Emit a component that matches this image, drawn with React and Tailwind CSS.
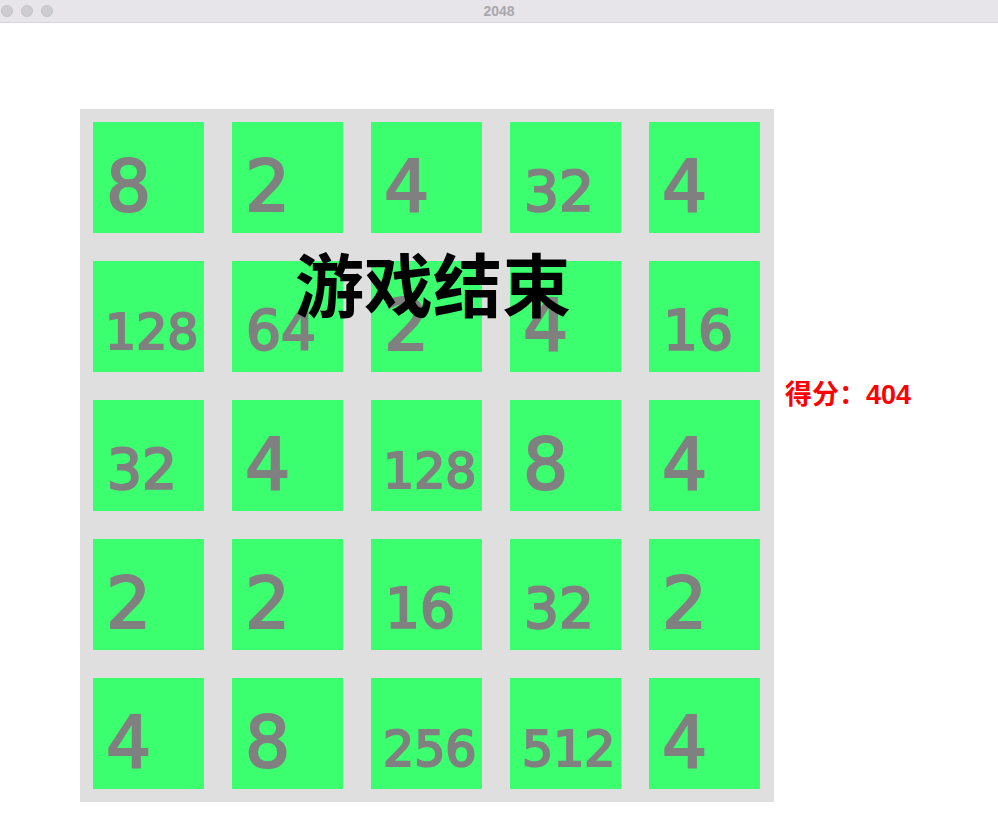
import React from "react";

const rows = [
  [8, 2, 4, 32, 4],
  [128, 64, 2, 4, 16],
  [32, 4, 128, 8, 4],
  [2, 2, 16, 32, 2],
  [4, 8, 256, 512, 4],
];

function Tile({ v }) {
  const n = String(v).length;
  const cls =
    n === 1
      ? "text-[71px] pb-[11px] pl-[13px]"
      : n === 2
      ? "text-[55px] pb-[14px] pl-[14px]"
      : "text-[49px] pb-[15px] pl-[12px]";
  return (
    <div className={`w-[111px] h-[111px] bg-[#3bff6e] flex items-end ${cls}`}>
      <span className="leading-none font-normal text-[#808080] [-webkit-text-stroke:2.2px_#808080]">{v}</span>
    </div>
  );
}

export default function App() {
  return (
    <div className="w-[998px] h-[825px] bg-white overflow-hidden font-['DejaVu_Sans',sans-serif]">
      <div className="relative h-[23px] bg-[#e7e5ea] border-b border-[#d6d4d9] flex items-center">
        <div className="flex gap-[8px] pl-[1px]">
          <div className="w-[12px] h-[12px] rounded-full bg-[#cdccd0] border border-[#c3c2c6]" />
          <div className="w-[12px] h-[12px] rounded-full bg-[#cdccd0] border border-[#c3c2c6]" />
          <div className="w-[12px] h-[12px] rounded-full bg-[#cdccd0] border border-[#c3c2c6]" />
        </div>
        <div className="absolute inset-0 flex items-center justify-center text-[14px] font-bold text-[#a9a8ac] font-['Liberation_Sans',sans-serif]">
          2048
        </div>
      </div>
      <div className="flex items-start pl-[80px] pt-[86px]">
        <div className="relative bg-[#dfdfdf] p-[13px] pr-[14px] grid grid-cols-5 gap-[28px]">
          {rows.flat().map((v, i) => (
            <Tile key={i} v={v} />
          ))}
          <div className="absolute left-[215px] top-[139px] text-[69px] leading-none font-bold text-black font-['Noto_Sans_CJK_SC',sans-serif] whitespace-nowrap">
            游戏结束
          </div>
        </div>
        <div className="ml-[11px] mt-[273px] text-[27px] leading-none font-bold text-[#ff0000] font-['Liberation_Sans','Noto_Sans_CJK_SC',sans-serif] whitespace-nowrap">
          得分：404
        </div>
      </div>
    </div>
  );
}
